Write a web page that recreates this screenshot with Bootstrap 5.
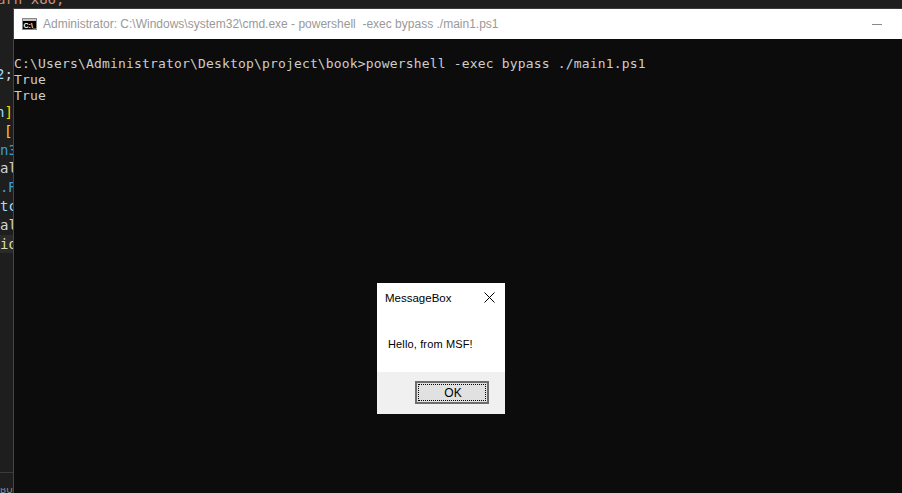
<!doctype html>
<html lang="en"><head><meta charset="utf-8"><title>cmd</title>
<link href="https://cdn.jsdelivr.net/npm/bootstrap@5.3.0/dist/css/bootstrap.min.css" rel="stylesheet">
<style>
html,body{height:493px;overflow:hidden;background:#1e1e1e}
.desk{position:relative;width:902px;height:493px;overflow:hidden;background:#1e1e1e}
.codecol{width:90px;height:493px;overflow:hidden;font:14px/18.8px "DejaVu Sans Mono",monospace;white-space:nowrap;color:#d4d4d4}
.code-inner{height:18.8px}
.code-stack{margin-top:-9.8px}
.shift{margin-left:-4px}
.topline{margin-left:-3px}
.curline{background:#2a2a2a;width:14px}
.ora{color:#ce9178}.blu{color:#3f9bd0}.lblu{color:#9cdcfe}.yel{color:#dcdcaa}.gold{color:#ffd700}.wht{color:#d4d4d4}
.statusbit{position:absolute;left:0;bottom:0;width:13px;height:5px;overflow:hidden;font:9px/5px "DejaVu Sans",sans-serif;color:#7f8fa0}
.hline{position:absolute;left:0;top:472px;width:13px;height:1px;background:#3a3a3a}
.cmdwin{position:absolute;left:13px;top:8px;width:889px;height:485px;background:#0c0c0c;border-left:1px solid #444;border-top:1px solid #3a3a3a}
.cmdtitle{height:30px;background:#fff;color:#999;font:12px/30px "Liberation Sans",Arial,sans-serif;padding-left:8px;white-space:pre}
.cmdtitle svg{flex:none;margin-right:6px}
.minbtn{width:10px;height:1px;background:#8a8a8a;margin-right:20px}
.cmdout{font:13px/16px "DejaVu Sans Mono",monospace;color:#cccccc;padding-top:17px;white-space:pre;letter-spacing:.17px}
.msgbox{position:absolute;left:377px;top:283px;width:128px;height:131px;background:#fff;color:#000;font:12px "Liberation Sans",Arial,sans-serif}
.msgtitle{height:29px;padding:0 10px 0 8px}
.msgtext{font-size:11.5px}
.msgbody{height:60px;padding:25px 0 0 11px;font-size:11px;line-height:14px;letter-spacing:.14px}
.msgfoot{height:42px;background:#f0f0f0;padding:9px 16px 0 0}
.okbtn{width:74px;height:23px;padding:0 0 0 2px;border:2px solid #6d6d6d;border-radius:0;background:#e1e1e1;color:#000;font:12px/1 "Liberation Sans",Arial,sans-serif;outline:1px dotted #000;outline-offset:-4px}
</style></head>
<body class="m-0">
<div class="desk">
  <div class="codecol">
    <div class="code-stack">
      <div class="code-inner"><span class="ora topline d-inline-block">arn x86;</span></div>
      <div class="code-inner"></div>
      <div class="code-inner"></div>
      <div class="code-inner"></div>
      <div class="code-inner"><span class="shift d-inline-block"><span class="lblu">2</span><span class="wht">;</span></span></div>
      <div class="code-inner"></div>
      <div class="code-inner"><span class="shift d-inline-block"><span class="lblu">n</span><span class="gold">]</span></span></div>
      <div class="code-inner ps-1"><span class="gold">[</span></div>
      <div class="code-inner"><span class="blu">n3</span></div>
      <div class="code-inner"><span class="wht">al</span></div>
      <div class="code-inner"><span class="blu">.R</span></div>
      <div class="code-inner"><span class="lblu">tc</span></div>
      <div class="code-inner"><span class="wht">al</span></div>
      <div class="code-inner curline"><span class="yel">io</span></div>
    </div>
  </div>
  <div class="hline"></div>
  <div class="statusbit">BUILD</div>

  <div class="cmdwin">
    <div class="cmdtitle d-flex align-items-center">
      <svg width="15" height="12" viewBox="0 0 15 12"><rect x=".5" y=".5" width="14" height="11" fill="#000" stroke="#888"/><rect x="1" y="1" width="13" height="2" fill="#c8c8c8"/><text x="1.500" y="9.500" font-family="Liberation Sans,sans-serif" font-size="7" font-weight="700" fill="#fff">C:\_</text></svg>
      <span class="flex-grow-1">Administrator: C:\Windows\system32\cmd.exe - powershell  -exec bypass ./main1.ps1</span>
      <span class="minbtn"></span>
    </div>
    <div class="cmdout">C:\Users\Administrator\Desktop\project\book&gt;powershell -exec bypass ./main1.ps1
True
True</div>
  </div>

  <div class="msgbox d-flex flex-column">
    <div class="msgtitle d-flex align-items-center justify-content-between">
      <span class="msgtext">MessageBox</span>
      <svg width="11" height="11" viewBox="0 0 11 11"><path d="M.5.5l10 10M10.500.5l-10 10" stroke="#000" fill="none"/></svg>
    </div>
    <div class="msgbody">Hello, from MSF!</div>
    <div class="msgfoot d-flex justify-content-end align-items-start">
      <button type="button" class="btn okbtn">OK</button>
    </div>
  </div>
</div>
</body></html>
